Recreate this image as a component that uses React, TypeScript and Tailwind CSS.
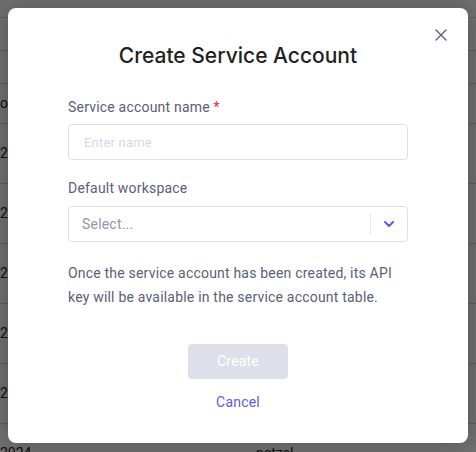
import React from 'react';

const rows = [
  { h: 'h-[33px]', date: '', owner: '' },
  { h: 'h-[33px]', date: '', owner: '' },
  { h: 'h-[40px]', date: 'o', owner: '' },
  { h: 'h-[60px]', date: '20', owner: '' },
  { h: 'h-[60px]', date: '20', owner: '' },
  { h: 'h-[60px]', date: '2', owner: '' },
  { h: 'h-[60px]', date: '2', owner: '' },
  { h: 'h-[60px]', date: '20', owner: '' },
  { h: 'h-[60px]', date: '2024', owner: 'netzel' },
];

const BackgroundTable: React.FC = () => (
  <div className="w-full bg-white pt-[17px] text-[14px] text-[#222]">
    {rows.map((r, i) => (
      <div key={i} className={`${r.h} flex items-center border-t border-[#d8d8d8]`}>
        <span className="w-[256px] pl-0">{r.date}</span>
        <span>{r.owner}</span>
      </div>
    ))}
  </div>
);

const CloseIcon: React.FC = () => (
  <svg width="12" height="12" viewBox="0 0 12 12" fill="none" stroke="#5a6078" strokeWidth="1.4" strokeLinecap="round">
    <path d="M1 1l10 10M11 1L1 11" />
  </svg>
);

const ChevronDown: React.FC = () => (
  <svg width="12" height="8" viewBox="0 0 12 8" fill="none" stroke="#5b5bf0" strokeWidth="2" strokeLinecap="round" strokeLinejoin="round">
    <path d="M2 2l4 4 4-4" />
  </svg>
);

export default function App() {
  return (
    <div
      className="relative w-[476px] h-[452px] overflow-hidden"
      style={{ fontFamily: 'Roboto, "Liberation Sans", sans-serif' }}
    >
      <BackgroundTable />
      <div className="absolute inset-0 bg-black/[0.56]" />

      <div className="absolute left-[8px] top-[8px] w-[460px] h-[435px] rounded-[8px] bg-white shadow-[0_0_24px_rgba(0,0,0,0.25)] flex flex-col items-center tracking-[0.2px]">
        <button className="absolute right-[19px] top-[19px] p-[2px]">
          <CloseIcon />
        </button>

        <h2 className="mt-[34px] font-['Inter',sans-serif] text-[21px] leading-[28px] font-medium text-[#1f1f24] tracking-normal">
          Create Service Account
        </h2>

        <div className="mt-[27px] w-[340px] flex flex-col">
          <label className="text-[14px] leading-[20px] text-[#5a6078]">
            Service account name <span className="text-[#e53030]">*</span>
          </label>
          <input
            placeholder="Enter name"
            className="mt-[7px] h-[36px] rounded-[4px] border border-[#dfe1ea] px-[15px] text-[13px] text-[#333] placeholder:text-[#d6d9e4] outline-none"
          />

          <label className="mt-[18px] text-[14px] leading-[20px] text-[#5a6078]">Default workspace</label>
          <div className="mt-[8px] h-[36px] rounded-[4px] border border-[#dfe1ea] flex items-center">
            <span className="flex-1 pl-[13px] text-[14px] text-[#9297a9]">Select...</span>
            <span className="w-px h-[20px] bg-[#e3e5ec]" />
            <span className="w-[36px] flex justify-center items-center">
              <ChevronDown />
            </span>
          </div>

          <p className="mt-[19px] text-[14px] leading-[24px] text-[#5a6078]">
            Once the service account has been created, its API key will be available in the service account table.
          </p>
        </div>

        <button
          disabled
          className="mt-[35px] w-[100px] h-[35px] rounded-[4px] bg-[#dde0ea] text-[14px] text-white"
        >
          Create
        </button>
        <button className="mt-[13px] text-[14px] leading-[20px] text-[#5b5bf0]">Cancel</button>
      </div>
    </div>
  );
}
